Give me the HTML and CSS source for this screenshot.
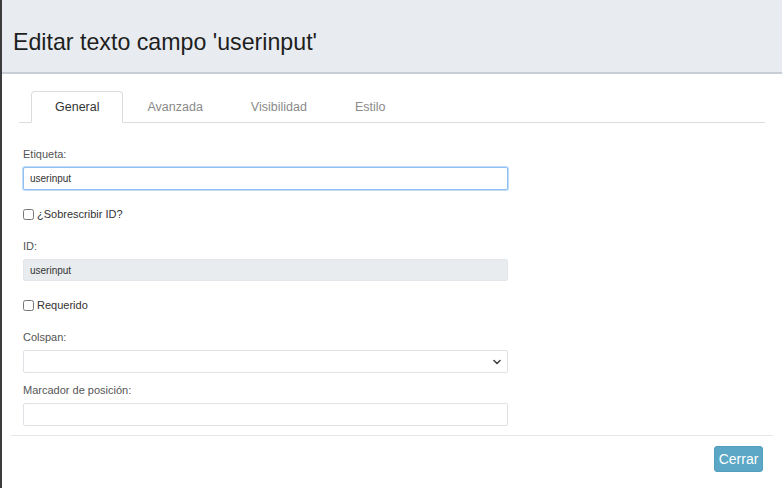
FILE: index.html
```html
<!DOCTYPE html>
<html lang="es">
<head>
<meta charset="utf-8">
<title>Editar texto campo</title>
<link rel="stylesheet" href="styles.css">
</head>
<body>
<div class="page">
  <header class="header">
    <h1 class="title">Editar texto campo 'userinput'</h1>
  </header>
  <div class="modal-body">
    <ul class="tabs">
      <li class="tab active">General</li>
      <li class="tab">Avanzada</li>
      <li class="tab">Visibilidad</li>
      <li class="tab">Estilo</li>
    </ul>
    <form class="form">
      <div class="field">
        <label class="label">Etiqueta:</label>
        <input class="control focus" type="text" value="userinput">
      </div>
      <label class="check"><input type="checkbox" class="box"> ¿Sobrescribir ID?</label>
      <div class="field">
        <label class="label">ID:</label>
        <input class="control disabled" type="text" value="userinput" disabled>
      </div>
      <label class="check"><input type="checkbox" class="box"> Requerido</label>
      <div class="field">
        <label class="label">Colspan:</label>
        <div class="select-wrap">
          <select class="control select"><option></option></select>
          <svg class="chevron" width="8" height="6" viewBox="0 0 8 6" aria-hidden="true">
            <path d="M1 1.5 L4 4.5 L7 1.5" fill="none" stroke="#444" stroke-width="1.6" stroke-linecap="round" stroke-linejoin="round"/>
          </svg>
        </div>
      </div>
      <div class="field last">
        <label class="label">Marcador de posición:</label>
        <input class="control" type="text">
      </div>
    </form>
  </div>
  <footer class="footer">
    <button class="btn" type="button">Cerrar</button>
  </footer>
</div>
</body>
</html>
```
FILE: styles.css
```css
* { box-sizing: border-box; }
html, body { margin: 0; padding: 0; background: #fff; }
body { font-family: "Liberation Sans", Arial, sans-serif; color: #333; }

.page {
  border-left: 2px solid #3c3c3c;
  min-height: 488px;
}

.header {
  background: #e8ecf0;
  border-bottom: 2px solid #c9ced6;
  height: 74px;
  padding: 28px 0 0 11px;
}
.title {
  margin: 0;
  font-weight: normal;
  font-size: 23.2px;
  line-height: 28px;
  color: #1e1e1e;
}

.modal-body { padding: 17px 17px 0; }

.tabs {
  list-style: none;
  margin: 0;
  padding: 0 0 0 12px;
  display: flex;
  border-bottom: 1px solid #dcdcdc;
  height: 32px;
}
.tab {
  font-size: 12.5px;
  line-height: 30px;
  padding: 0 23px;
  color: #8a8a8a;
  border: 1px solid transparent;
  border-radius: 4px 4px 0 0;
  height: 32px;
}
.tab.active {
  color: #333;
  background: #fff;
  border-color: #dcdcdc #dcdcdc #fff;
}

.form {
  padding: 24px 0 0 4px;
  width: 489px;
}

.field { margin-bottom: 10px; }
.field.last { margin-bottom: 0; }

.label {
  display: block;
  font-size: 11px;
  line-height: 14px;
  color: #555;
  margin-bottom: 6px;
}

.control {
  display: block;
  width: 485px;
  height: 23px;
  border: 1px solid #dfe2e6;
  border-radius: 2px;
  padding: 0 6px;
  font-family: "Liberation Sans", Arial, sans-serif;
  font-size: 10px;
  color: #333;
  background: #fff;
  outline: none;
}
.control.focus {
  border-color: #8fc0f4;
  box-shadow: 0 0 0 1px #c2dcf8;
}
.control.disabled {
  background: #e9ecef;
  height: 22px;
  border-color: #e2e5e9;
}

.select-wrap {
  position: relative;
  width: 485px;
}
.select {
  appearance: none;
  -webkit-appearance: none;
  padding: 0 2px;
}
.chevron {
  position: absolute;
  right: 7px;
  top: 9px;
  pointer-events: none;
}

.check {
  display: flex;
  align-items: center;
  font-size: 11px;
  line-height: 14px;
  color: #333;
  margin: 17px 0 18px;
  gap: 3px;
}
.box {
  margin: 0;
  width: 11px;
  height: 11px;
}

.footer {
  margin: 9px 9px 0;
  border-top: 1px solid #e6e8eb;
  padding: 10px 10px 0 0;
  display: flex;
  justify-content: flex-end;
}
.btn {
  width: 49px;
  height: 26px;
  border: 1px solid #529ebc;
  border-radius: 3px;
  background: #5ba7c5;
  color: #fff;
  font-family: "Liberation Sans", Arial, sans-serif;
  font-size: 14px;
  padding: 0;
}
```
